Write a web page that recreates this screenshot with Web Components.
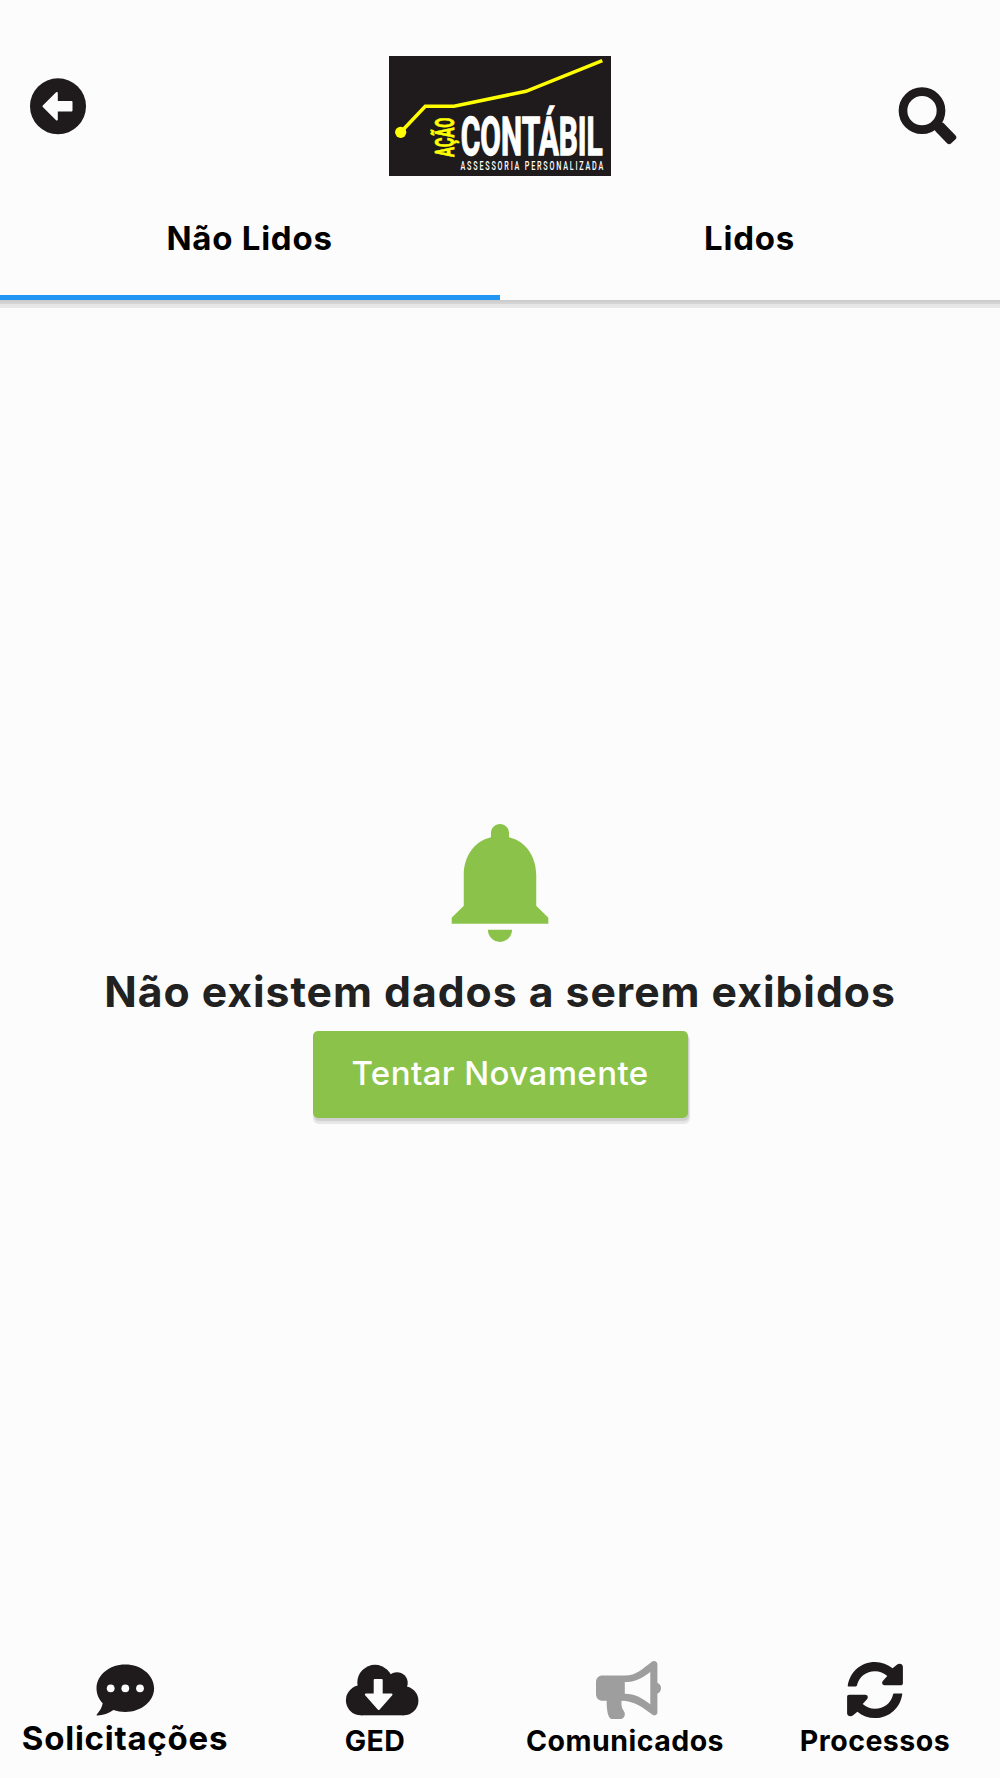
<!DOCTYPE html>
<html lang="pt-BR">
<head>
<meta charset="UTF-8">
<title>Comunicados</title>
<style>
  body {
    margin: 0;
    background: #fcfcfc;
    font-family: Inter, "Liberation Sans", sans-serif;
  }
</style>
</head>
<body>
<comunicados-page></comunicados-page>
<script>
const ICONS = {
  chat: `
    <path d="M48.3 10.6c15.9 0 28.8 10.6 28.8 23.7S64.2 58 48.3 58c-4.3 0-8.3-.6-11.9-1.9-4.6 3.3-10.3 5.3-16.2 5.3-.6 0-.8-.6-.4-1 2.9-3.2 5.2-7 5.9-11.1-3.9-4-6.2-9.3-6.2-15 0-13.1 12.9-23.7 28.8-23.7z"/>
    <g fill="#fcfcfc"><circle cx="33.7" cy="34.3" r="3.9"/><circle cx="48.3" cy="34.3" r="3.9"/><circle cx="63" cy="34.3" r="3.9"/></g>`,
  cloud: `
    <circle cx="48" cy="28.5" r="17.7"/><circle cx="70" cy="28.9" r="10.7"/>
    <circle cx="33.9" cy="46.3" r="15"/><circle cx="76.9" cy="46.8" r="14.5"/>
    <rect x="33.9" y="28" width="43" height="33.3"/>
    <path d="M47.7 26h7v14.5h9.8L51.7 55 38.9 40.5h8.8z" fill="#fcfcfc" stroke="#fcfcfc" stroke-width="2" stroke-linejoin="round"/>`,
  megaphone: `
    <path fill-rule="evenodd" d="M25.5 21.6H48C59 21.6 66 14.5 74.5 8c2.5-2 5.9-.9 5.9 2.5V28.8c4.8 2.2 4.8 8.8 0 11V58.5c0 2.5-3 3.8-5.2 2C66 53.5 57 46.7 44.5 46.7c-.3 4.6.1 7.2 2.3 10.4 2.4 3.6.3 7.9-3 7.9H35.3c-5 0-5.7-12-5.6-18.3h-4.2c-3.7 0-6.5-2.7-6.5-6.5V28.1c0-3.8 2.8-6.5 6.5-6.5zM47.8 28.1v11.7C58 39.8 66 44.5 73.3 50.3V17.9C66 23.5 58 28.1 47.8 28.1z"/>`,
  refresh: `
    <path id="half" d="M20.7 32.1C22.6 18.2 33.8 8 48 8c6.8 0 12.7 2.3 17.6 6.3l4.3-3.6c2.2-1.7 6-.9 6 2.1v16.1c0 1.6-.7 2.3-2.3 2.3H57.7c-2.6 0-3.3-2.9-1.7-4.5l4.3-4.7c-3.5-3.1-7.6-4.7-12.3-4.7-8.8 0-16 5.4-18 14-.2.7-.5 1.1-1.2 1.1h-7.2c-.7 0-1-.2-.9-.3z"/>
    <use href="#half" transform="rotate(180 48 36)"/>`,
};

class AppLogo extends HTMLElement {
  constructor() {
    super();
    this.attachShadow({ mode: 'open' });
  }

  connectedCallback() {
    this.shadowRoot.innerHTML = `
      <style>
        :host { display: block; width: 222px; height: 120px; }
        svg { display: block; }
        text { font-family: "Liberation Sans Narrow", Roboto, sans-serif; font-weight: 700; }
        .name { fill: #fff; stroke: #fff; stroke-width: 1.3px; }
        .prefix { fill: #ff0; stroke: #ff0; stroke-width: 0.7px; }
        .tagline { fill: #fff; font-weight: 500; }
      </style>
      <svg width="222" height="120" viewBox="0 0 222 120">
        <rect width="222" height="120" fill="#1f1a1b"/>
        <path d="M11.7 76.3 36.3 50.3H65L137 35.3 213.3 4.7" fill="none" stroke="#ff0" stroke-width="3.5"/>
        <circle cx="11.7" cy="76.3" r="5.6" fill="#ff0"/>
        <text class="prefix" transform="translate(64.6 101) rotate(-90)" font-size="26" textLength="39.5" lengthAdjust="spacingAndGlyphs">AÇÃO</text>
        <text class="name" x="71.8" y="99" font-size="53" textLength="142" lengthAdjust="spacingAndGlyphs">CONTÁBIL</text>
        <text class="tagline" transform="translate(71.5 114) scale(.6 1)" font-size="12" textLength="238">ASSESSORIA PERSONALIZADA</text>
      </svg>
    `;
  }
}
customElements.define('app-logo', AppLogo);

class AppHeader extends HTMLElement {
  constructor() {
    super();
    this.attachShadow({ mode: 'open' });
  }

  connectedCallback() {
    this.shadowRoot.innerHTML = `
      <style>
        :host { display: block; }
        .bar {
          display: flex;
          justify-content: space-between;
          align-items: flex-start;
          box-sizing: border-box;
          height: 200px;
          padding: 56px 30px 0;
        }
        button { border: 0; padding: 0; background: none; width: 80px; height: 120px; }
        svg { display: block; }
        .tabs { display: flex; height: 99.5px; }
        .shadow {
          height: 8.5px;
          background: linear-gradient(#cacaca, #d8d8d8 4.5px, #e6e6e6 4.5px, #e8e8e8);
        }
      </style>
      <div class="bar">
        <button aria-label="Voltar">
          <svg width="80" height="120" viewBox="0 0 80 120">
            <circle cx="28" cy="50.3" r="28" fill="#1f1a1b"/>
            <path d="M13.5 50.3 26.8 37v9h14.7v8.6H26.8v9z" fill="#fcfcfc" stroke="#fcfcfc" stroke-width="2" stroke-linejoin="round"/>
          </svg>
        </button>
        <app-logo></app-logo>
        <button aria-label="Pesquisar">
          <svg width="80" height="120" viewBox="0 0 80 120">
            <circle cx="32" cy="54.7" r="19" fill="none" stroke="#1f1a1b" stroke-width="8.7"/>
            <rect y="-5.8" width="22" height="11.6" rx="3" transform="translate(48 69.5) rotate(46)" fill="#1f1a1b"/>
          </svg>
        </button>
      </div>
      <div class="tabs"><slot></slot></div>
      <div class="shadow"></div>
    `;
  }
}
customElements.define('app-header', AppHeader);

class AppTab extends HTMLElement {
  constructor() {
    super();
    this.attachShadow({ mode: 'open' });
  }

  connectedCallback() {
    this.shadowRoot.innerHTML = `
      <style>
        :host {
          flex: 1;
          box-sizing: border-box;
          padding: 18px 1px 0 0;
          text-align: center;
          font-size: 33px;
          line-height: 40px;
          font-weight: 700;
          letter-spacing: 0.75px;
          color: #000;
        }
        :host([active]) { border-bottom: 5px solid #2196f3; }
      </style>
      <slot></slot>
    `;
  }
}
customElements.define('app-tab', AppTab);

class EmptyState extends HTMLElement {
  constructor() {
    super();
    this.attachShadow({ mode: 'open' });
  }

  connectedCallback() {
    this.shadowRoot.innerHTML = `
      <style>
        :host {
          flex: 1;
          display: flex;
          flex-direction: column;
          align-items: center;
          padding-top: 501px;
        }
        svg { display: block; width: 146px; height: 145px; }
        p {
          margin: 13px 0 14px;
          font-size: 42.7px;
          line-height: 50px;
          font-weight: 700;
          letter-spacing: 0.98px;
          color: #212121;
          white-space: nowrap;
        }
        button {
          width: 375px;
          height: 87px;
          border: 0;
          padding: 0 0 3px;
          border-radius: 5px;
          background: #8bc34a;
          color: #fff;
          font: 500 33px/40px Inter, sans-serif;
          letter-spacing: 0.41px;
          box-shadow: 1px 3px 1px #cfcfcf, 1px 5px 1px 1px #e6e6e6;
        }
      </style>
      <svg viewBox="0 0 24 24" fill="#8bc34a">
        <path d="M12 22c1.1 0 2-.9 2-2h-4c0 1.1.89 2 2 2zm6-6v-5c0-3.07-1.64-5.64-4.5-6.32V4c0-.83-.67-1.5-1.5-1.5s-1.5.67-1.5 1.5v.68C7.63 5.36 6 7.92 6 11v5l-2 2v1h16v-1l-2-2z"/>
      </svg>
      <p><slot></slot></p>
      <button>Tentar Novamente</button>
    `;
  }
}
customElements.define('empty-state', EmptyState);

class NavItem extends HTMLElement {
  constructor() {
    super();
    this.attachShadow({ mode: 'open' });
  }

  connectedCallback() {
    const color = this.hasAttribute('current') ? '#9e9e9e' : '#1f1a1b';
    this.shadowRoot.innerHTML = `
      <style>
        :host {
          flex: 1;
          display: flex;
          flex-direction: column;
          align-items: center;
          font-size: 28.5px;
          font-weight: 700;
          letter-spacing: 0.48px;
          color: #000;
        }
        svg { display: block; }
        span { margin-top: 1px; line-height: 40px; }
        :host([large]) { font-size: 33px; letter-spacing: 0.75px; }
        :host([large]) span { margin-top: -2px; }
      </style>
      <svg width="96" height="66" viewBox="0 0 96 66" fill="${color}">${ICONS[this.getAttribute('icon')]}</svg>
      <span><slot></slot></span>
    `;
  }
}
customElements.define('nav-item', NavItem);

class ComunicadosPage extends HTMLElement {
  constructor() {
    super();
    this.attachShadow({ mode: 'open' });
  }

  connectedCallback() {
    this.shadowRoot.innerHTML = `
      <style>
        :host {
          display: flex;
          flex-direction: column;
          height: 1778px;
          overflow: hidden;
        }
        nav { display: flex; height: 124px; }
      </style>
      <app-header>
        <app-tab active>Não Lidos</app-tab>
        <app-tab>Lidos</app-tab>
      </app-header>
      <empty-state>Não existem dados a serem exibidos</empty-state>
      <nav>
        <nav-item icon="chat" large>Solicitações</nav-item>
        <nav-item icon="cloud">GED</nav-item>
        <nav-item icon="megaphone" current>Comunicados</nav-item>
        <nav-item icon="refresh">Processos</nav-item>
      </nav>
    `;
  }
}
customElements.define('comunicados-page', ComunicadosPage);
</script>
</body>
</html>
